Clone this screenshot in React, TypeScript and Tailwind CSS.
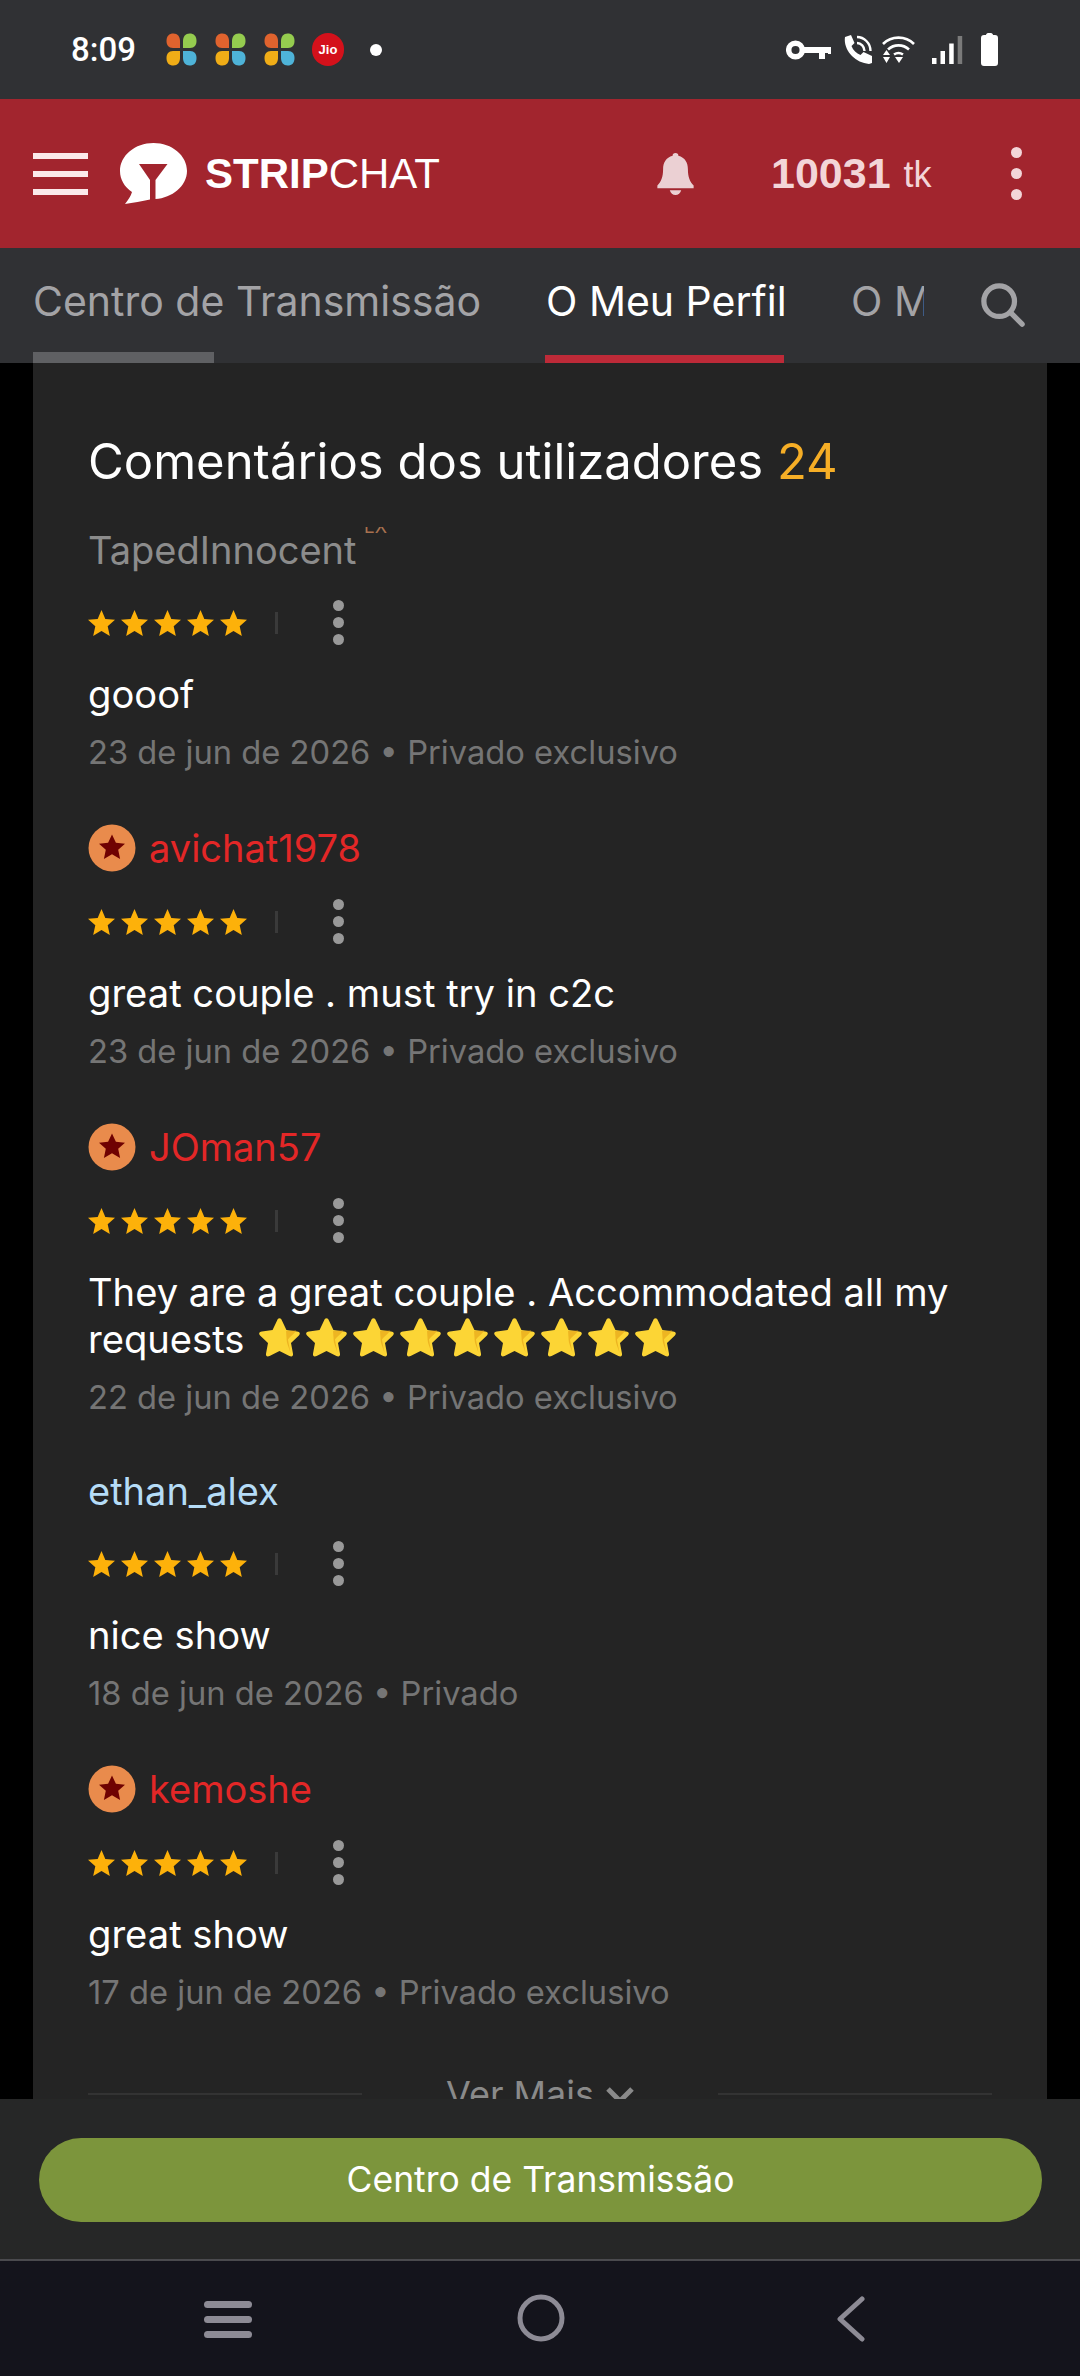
import React from "react";

const Star = () => (
  <svg width="27" height="26" viewBox="0 0 24 23" className="block shrink-0">
    <path fill="#fdb10a" d="M12 0l3.400 7.900 8.600.8-6.500 5.700 1.900 8.600-7.400-4.500-7.400 4.500 1.900-8.600L0 8.700l8.600-.8z" />
  </svg>
);

const BigStar = () => (
  <svg width="43" height="40" viewBox="0 0 46 42" className="block shrink-0">
    <path fill="#fcd535" d="M23 0c1.200 0 2 1 2.600 2.300l4.800 10.200 11.400 1.500c3.200.4 3.800 2.500 1.700 4.500l-8.200 7.800 2.100 11.300c.5 2.800-1.300 4-3.800 2.700L23 35l-10.600 5.300c-2.500 1.300-4.300.1-3.800-2.700l2.100-11.300-8.200-7.800c-2.100-2-1.500-4.100 1.700-4.500l11.400-1.500 4.800-10.200C21 1 21.800 0 23 0z" />
    <path fill="#e8a91c" d="M30 13.500l11-.5c-3 4-7 7-9 9.500l2.700 14c-2-6-4-10-4-13z" opacity="0.75" />
  </svg>
);

const Dots = () => (
  <div className="flex flex-col gap-[6px]">
    <span className="w-[11px] h-[11px] rounded-full bg-[#999999]" />
    <span className="w-[11px] h-[11px] rounded-full bg-[#999999]" />
    <span className="w-[11px] h-[11px] rounded-full bg-[#999999]" />
  </div>
);

const Badge = () => (
  <svg width="48" height="48" viewBox="0 0 48 48" className="block shrink-0">
    <circle cx="24" cy="24" r="23.500" fill="#e98b4c" />
    <path fill="#6f0202" d="M24 10.500l3.900 8.300 9.100.9-6.800 6.100 1.900 9.200-8.100-4.700-8.100 4.700 1.900-9.200L11 19.700l9.100-.9z" />
  </svg>
);

const petal = "M1.500 8C1.500 3 4 .5 8.500.5c4 0 6.500 3 6.500 7.500v7H8C3.500 15 1.500 12 1.500 8z";
const Clover = () => (
  <svg width="33" height="33" viewBox="0 0 33 33" className="block shrink-0">
    <path fill="#e0632e" d={petal} />
    <path fill="#95cc4f" d={petal} transform="translate(33 0) scale(-1 1)" />
    <path fill="#f0ad17" d={petal} transform="translate(0 33) scale(1 -1)" />
    <path fill="#4eb3d8" d={petal} transform="translate(33 33) scale(-1 -1)" />
  </svg>
);

type Review = {
  name: string;
  color: string;
  badge?: boolean;
  ex?: boolean;
  text: string;
  date: string;
  mt: string;
};

const reviews: Review[] = [
  { name: "TapedInnocent", color: "text-[#8c8c8c]", ex: true, text: "gooof", date: "23 de jun de 2026 • Privado exclusivo", mt: "mt-0" },
  { name: "avichat1978", color: "text-[#e32727]", badge: true, text: "great couple . must try in c2c", date: "23 de jun de 2026 • Privado exclusivo", mt: "mt-[49px]" },
  { name: "JOman57", color: "text-[#e32727]", badge: true, text: "They are a great couple . Accommodated all my", date: "22 de jun de 2026 • Privado exclusivo", mt: "mt-[49px]" },
  { name: "ethan_alex", color: "text-[#b5dcf7]", text: "nice show", date: "18 de jun de 2026 • Privado", mt: "mt-[49px]" },
  { name: "kemoshe", color: "text-[#e32727]", badge: true, text: "great show", date: "17 de jun de 2026 • Privado exclusivo", mt: "mt-[49px]" },
];

const ReviewItem = ({ r, i }: { r: Review; i: number }) => (
  <div className={r.mt}>
    <div className={`flex items-center gap-[13px] ${r.badge ? "h-[51px]" : "h-[48px]"}`}>
      {r.badge && <Badge />}
      <span className={`relative text-[38px] leading-[48px] ${r.color}`}>
        {r.name}
        {r.ex && (
          <span className="absolute left-[276px] top-[1px] h-[6px] overflow-hidden text-[18px] leading-[18px] text-[#a8714f]">
            <span className="block -translate-y-[9.500px]">EX</span>
          </span>
        )}
      </span>
    </div>
    <div className="flex items-center h-[48px] mt-[25px]">
      <div className="flex gap-[6px]">
        <Star /><Star /><Star /><Star /><Star />
      </div>
      <span className="ml-[28px] w-[3px] h-[22px] bg-[#3a3a3a]" />
      <span className="ml-[55px] -mt-[2px]"><Dots /></span>
    </div>
    <div className="text-[38.150px] leading-[47px] text-white mt-[24px]">
      {r.text}
      {i === 2 && (
        <div className="flex items-center h-[47px]">
          <span className="w-[170px] shrink-0">requests</span>
          <div className="flex gap-[4px] -mt-[3px]">
            {[0, 1, 2, 3, 4, 5, 6, 7, 8].map((k) => <BigStar key={k} />)}
          </div>
        </div>
      )}
    </div>
    <div className="text-[32.700px] leading-[42px] text-[#757575] mt-[13px]">{r.date}</div>
  </div>
);

export default function App() {
  return (
    <div className="relative w-[1080px] h-[2376px] overflow-hidden bg-black font-['Inter',sans-serif] flex flex-col">
      {/* status bar */}
      <div className="h-[99px] shrink-0 bg-[#303134] flex items-center pl-[71px] pr-[82px]">
        <span className="text-[33px] font-medium text-white font-['Roboto',sans-serif] w-[94px]">8:09</span>
        <div className="flex gap-[16px]"><Clover /><Clover /><Clover /></div>
        <div className="ml-[16px] w-[32px] h-[33px] rounded-full bg-[#d4111b] flex items-center justify-center text-[13px] font-bold text-white font-['Liberation_Sans',sans-serif]">Jio</div>
        <span className="ml-[26px] w-[12px] h-[12px] rounded-full bg-white" />
        <div className="ml-auto flex items-center">
          <svg width="45" height="20" viewBox="0 0 45 20" className="block">
            <circle cx="9.500" cy="10" r="6.800" fill="none" stroke="#fff" strokeWidth="5.500" />
            <path fill="#fff" d="M17 7h28v7h-3v-1h-3v6h-6v-6H17z" />
          </svg>
          <svg width="28" height="29" viewBox="0 0 28 29" className="block ml-[13px]">
            <path fill="#fff" d="M1 2l6-2 3.500 8-3 3c1.500 4 5 7.500 9 9l3-3 8.500 4v7l-3 1C11 28-1 15 1 2z" />
            <path fill="none" stroke="#fff" strokeWidth="2.400" d="M13 2c7 0 13.500 6 13.500 14M13 8c4 0 7.500 3.500 7.500 8" />
          </svg>
          <svg width="33" height="27" viewBox="0 0 33 27" className="block ml-[10px]">
            <path fill="none" stroke="#fff" strokeWidth="2.600" d="M1 8c8.500-8.500 22.500-8.500 31 0M6 13.500c6-5.500 15-5.500 21 0M12 18.500c3-2 6-2 9 0" />
            <path fill="#fff" d="M13 21h8l-4 6zM1 19l3.500-5 3.500 5zM1 21h7l-3.500 6z" />
          </svg>
          <svg width="31" height="28" viewBox="0 0 31 28" className="block ml-[17px]">
            <rect x="0" y="22" width="4.500" height="6" fill="#fff" />
            <rect x="8.500" y="15" width="4.500" height="13" fill="#fff" />
            <rect x="17.200" y="7.500" width="4.500" height="20.500" fill="#fff" />
            <rect x="25.700" y="0" width="4.500" height="28" fill="#7a7a7a" />
          </svg>
          <svg width="17" height="33" viewBox="0 0 17 33" className="block ml-[18px]">
            <path fill="#fff" d="M5 2c0-1 1-2 2-2h3c1 0 2 1 2 2h2c2 0 3 1 3 3v25c0 2-1 3-3 3H3c-2 0-3-1-3-3V5c0-2 1-3 3-3z" />
          </svg>
        </div>
      </div>

      {/* red header */}
      <div className="h-[149px] shrink-0 bg-[#a2252e] flex items-center pl-[33px] pr-[58px]">
        <div className="flex flex-col gap-[12px] w-[55px]">
          <span className="h-[6px] bg-[#fbe9ea]" />
          <span className="h-[6px] bg-[#fbe9ea]" />
          <span className="h-[6px] bg-[#fbe9ea]" />
        </div>
        <svg width="67" height="61" viewBox="0 0 67 61" className="block shrink-0 ml-[32px]">
          <path fill="#fff" d="M33.500 0C52 0 67 12.500 67 28c0 15-15 27-31.500 28V37l12-16H19l11 16v19.500C22 58 13 60 5 61c3-4 6-8 7-12C4.500 44 0 36.500 0 28 0 12.500 15 0 33.500 0z" />
        </svg>
        <span className="ml-[18px] w-[235px] shrink-0 whitespace-nowrap text-[42px] text-white font-['Liberation_Sans',sans-serif] leading-none">
          <span className="font-bold">STRIP</span>CHAT
        </span>
        <svg width="37" height="42" viewBox="0 0 38 44" className="block shrink-0 ml-[217px]">
          <path fill="#ebd0d3" d="M19 0c2 0 3 1 3 3 7 2 10 7 10 14 0 8 2 13 6 17v3H0v-3c4-4 6-9 6-17 0-7 3-12 10-14 0-2 1-3 3-3zM13 39h12c-1 3-3 5-6 5s-5-2-6-5z" />
        </svg>
        <span className="ml-[77px] text-[#f3d5d8] text-[43px] font-bold leading-none font-['Liberation_Sans',sans-serif]">10031</span>
        <span className="ml-[13px] mt-[3px] text-[#f3d5d8] text-[36px] leading-none font-['Liberation_Sans',sans-serif]">tk</span>
        <div className="ml-auto flex flex-col gap-[10px]">
          <span className="w-[11px] h-[11px] rounded-full bg-[#f3d5d8]" />
          <span className="w-[11px] h-[11px] rounded-full bg-[#f3d5d8]" />
          <span className="w-[11px] h-[11px] rounded-full bg-[#f3d5d8]" />
        </div>
      </div>

      {/* tabs */}
      <div className="h-[115px] shrink-0 bg-[#303134] flex relative">
        <div className="w-[546px] pl-[33px] relative">
          <span className="block text-[41px] leading-[50px] mt-[28px] text-[#a3a3a6] whitespace-nowrap">Centro de Transmissão</span>
          <span className="absolute left-[33px] bottom-0 w-[181px] h-[11px] bg-[#5f6063]" />
        </div>
        <div className="w-[305px] relative">
          <span className="block text-[41px] leading-[50px] mt-[28px] text-white whitespace-nowrap">O Meu Perfil</span>
          <span className="absolute -left-[1px] bottom-0 w-[239px] h-[8px] bg-[#bd2a38]" />
        </div>
        <div className="w-[73px] overflow-hidden">
          <span className="block text-[41px] leading-[50px] mt-[28px] text-[#a3a3a6] whitespace-nowrap">O Meu</span>
        </div>
        <svg width="44" height="44" viewBox="0 0 46 46" className="block ml-[57px] mt-[35px]" fill="none" stroke="#a3a3a6" strokeWidth="5.500" strokeLinecap="round">
          <circle cx="19" cy="19" r="16" />
          <path d="M31 31l12 12" />
        </svg>
      </div>

      {/* content */}
      <div className="flex-1 min-h-0 overflow-hidden">
        <div className="mx-[33px] w-[1014px] h-full bg-[#242424] px-[55px] pt-[69px]">
          <h2 className="text-[49px] leading-[60px] text-white whitespace-nowrap">
            Comentários dos utilizadores <span className="text-[#f6ae26]">24</span>
          </h2>
          <div className="mt-[34px]">
            {reviews.map((r, i) => <ReviewItem key={r.name} r={r} i={i} />)}
          </div>
          <div className="flex items-center mt-[61px] h-[40px]">
            <span className="w-[274px] h-[2px] bg-[#333333]" />
            <span className="flex-1 flex items-center justify-center text-[36px] leading-[48px] text-[#8a8a8a]">
              Ver Mais
              <svg width="28" height="18" viewBox="0 0 28 18" className="ml-[12px] mt-[2px]" fill="none" stroke="#8a8a8a" strokeWidth="5">
                <path d="M2 3l12 12 12-12" />
              </svg>
            </span>
            <span className="w-[274px] h-[2px] bg-[#333333]" />
          </div>
        </div>
      </div>

      {/* bottom CTA */}
      <div className="absolute left-0 right-0 top-[2099px] h-[162px] bg-[#262727] border-b-[2px] border-[#4a4a4e] pt-[39px] px-[39px]">
        <div className="w-[1003px] h-[84px] rounded-full bg-[#7c953c] flex items-center justify-center text-[35.500px] text-white">
          Centro de Transmissão
        </div>
      </div>

      {/* nav bar */}
      <div className="absolute left-0 right-0 top-[2261px] bottom-0 bg-[#14141c]">
        <div className="absolute left-[204px] top-[40px] w-[48px] flex flex-col gap-[8px]">
          <span className="h-[7px] rounded-full bg-[#8d8b95]" />
          <span className="h-[7px] rounded-full bg-[#8d8b95]" />
          <span className="h-[7px] rounded-full bg-[#8d8b95]" />
        </div>
        <svg width="48" height="48" viewBox="0 0 48 48" className="absolute left-[517px] top-[33px]" fill="none" stroke="#8d8b95" strokeWidth="5">
          <circle cx="24" cy="24" r="21" />
        </svg>
        <svg width="30" height="46" viewBox="0 0 30 46" className="absolute left-[835px] top-[35px]" fill="none" stroke="#8d8b95" strokeWidth="5" strokeLinecap="round" strokeLinejoin="round">
          <path d="M27 3L5 23l22 20" />
        </svg>
      </div>
    </div>
  );
}
